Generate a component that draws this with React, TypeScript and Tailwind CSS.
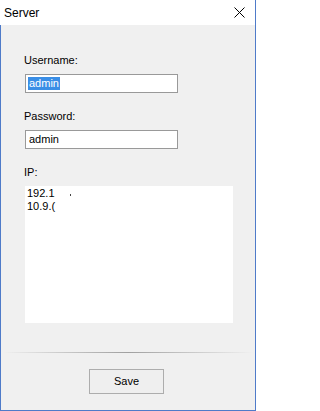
import React from 'react';

const font = { fontFamily: '"Liberation Sans", Arial, sans-serif' };

function Field({ label, children }: { label: string; children: React.ReactNode }) {
  return (
    <div className="flex flex-col">
      <label className="text-[11px] leading-[13px] text-black mb-[7px] -ml-px">{label}</label>
      {children}
    </div>
  );
}

export default function App() {
  return (
    <div className="w-[256px] h-[411px] bg-[#f0f0f0] border-r border-b border-[#4f7bc9] flex flex-col" style={font}>
      <div className="h-[25px] bg-white flex items-center justify-between pl-[4px] pr-[10px] shrink-0">
        <span className="text-[12px] leading-[14px] text-black">Server</span>
        <svg width="11" height="11" viewBox="0 0 11 11" className="text-black">
          <path d="M0.5 0.5 L10.5 10.5 M10.5 0.5 L0.5 10.5" stroke="currentColor" strokeWidth="1" fill="none" />
        </svg>
      </div>
      <div className="flex-1 border-l border-[#4f7bc9] flex flex-col">
        <div className="flex flex-col pl-[24px] pt-[29px] gap-[17px]">
          <Field label="Username:">
            <div className="w-[153px] h-[19px] bg-white border border-[#999999] flex items-center pl-[2px]">
              <span className="bg-[#3a8ee6] text-white text-[11px] leading-[13px] px-px">admin</span>
            </div>
          </Field>
          <Field label="Password:">
            <div className="w-[153px] h-[19px] bg-white border border-[#999999] flex items-center pl-[3px]">
              <span className="text-black text-[11px] leading-[13px]">admin</span>
            </div>
          </Field>
          <Field label="IP:">
            <div className="w-[208px] h-[137px] bg-white pl-[2px] pt-[1px] flex flex-col text-[11px] leading-[13px] text-black">
              <div className="flex items-center">
                <span>192.1</span>
                <span className="ml-[15px] mt-[2px] w-[1px] h-[2px] bg-[#444]"></span>
              </div>
              <div className="whitespace-nowrap">10.9.(</div>
            </div>
          </Field>
        </div>
        <div className="mt-[29px] h-px bg-gradient-to-r from-transparent via-[#a0a0a0] to-transparent mx-[2px]"></div>
        <div className="flex pt-[16px] pl-[88px]">
          <button className="w-[75px] h-[25px] border border-[#adadad] bg-[#efefef] text-[11px] leading-[13px] text-black">
            Save
          </button>
        </div>
      </div>
    </div>
  );
}
